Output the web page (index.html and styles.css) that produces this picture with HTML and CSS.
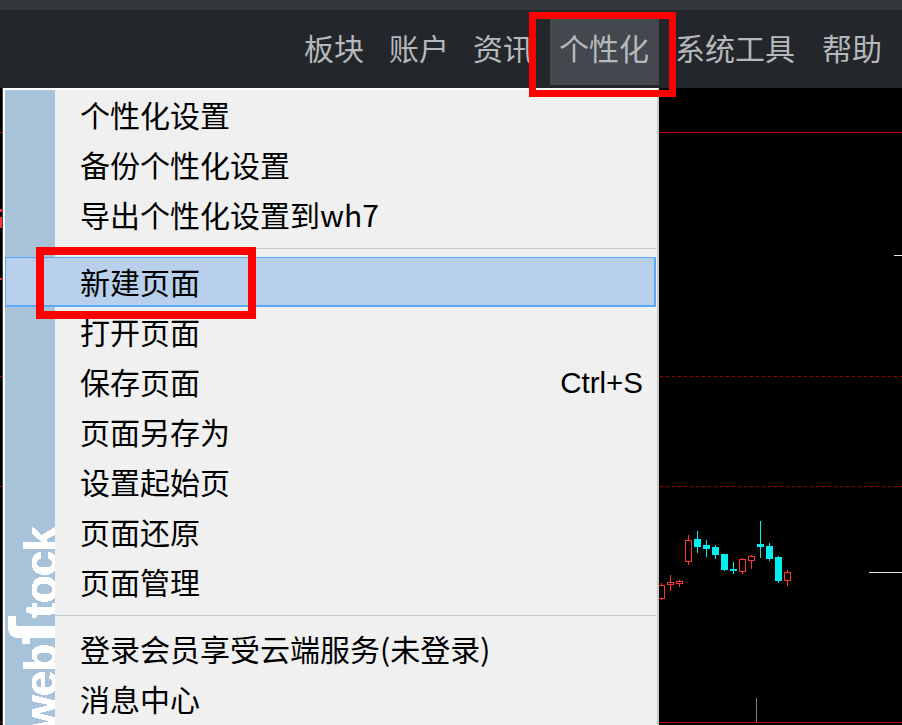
FILE: index.html
```html
<!DOCTYPE html>
<html lang="zh-CN">
<head>
<meta charset="utf-8">
<title>个性化</title>
<link rel="stylesheet" href="styles.css">
</head>
<body>
<div class="app">
  <div class="topstrip"></div>
  <nav class="menubar">
    <span class="nav-item">板块</span>
    <span class="nav-item">账户</span>
    <span class="nav-item nav-news">资讯</span>
    <span class="nav-item nav-active">个性化</span>
    <span class="nav-item nav-tools">系统工具</span>
    <span class="nav-item nav-help">帮助</span>
  </nav>
  <main class="chart">
    <svg class="chart-svg" width="902" height="637" viewBox="0 88 902 637">
      <defs>
        <filter id="hard-edge" x="0" y="0" width="100%" height="100%">
          <feComponentTransfer><feFuncA type="discrete" tableValues="0 1"/></feComponentTransfer>
        </filter>
      </defs>
      <g class="grid-solid">
        <line x1="0" x2="902" y1="132.5" y2="132.5"/>
        <line x1="0" x2="902" y1="722.5" y2="722.5"/>
      </g>
      <g class="grid-dash">
        <line x1="0" x2="902" y1="376.5" y2="376.5"/>
        <line x1="0" x2="902" y1="486.5" y2="486.5"/>
      </g>
      <g class="edge-mark">
        <rect x="0" y="209" width="2" height="3"/>
        <rect x="0" y="217" width="2" height="11"/>
        <rect x="0" y="278" width="2" height="2"/>
      </g>
      <g class="ticks">
        <line x1="894" x2="902" y1="255.5" y2="255.5"/>
        <line x1="869" x2="902" y1="572.5" y2="572.5"/>
      </g>
      <line class="vtick" x1="756.5" x2="756.5" y1="698" y2="722"/>
      <g class="up">
        <line x1="661.5" x2="661.5" y1="583" y2="600"/><rect x="658.5" y="585.5" width="6" height="13"/>
        <line x1="670.5" x2="670.5" y1="575" y2="591"/><rect x="667.5" y="582.5" width="6" height="2"/>
        <line x1="679.5" x2="679.5" y1="580" y2="587"/><rect x="676.5" y="581.5" width="6" height="2"/>
        <line x1="688.5" x2="688.5" y1="535" y2="565"/><rect x="685.5" y="540.5" width="6" height="21"/>
        <line x1="742.5" x2="742.5" y1="558" y2="574"/><rect x="739.5" y="559.5" width="6" height="12"/>
        <line x1="751.5" x2="751.5" y1="555" y2="569"/><rect x="748.5" y="556.5" width="6" height="4"/>
        <line x1="787.5" x2="787.5" y1="570" y2="586"/><rect x="784.5" y="572.5" width="6" height="8"/>
      </g>
      <g class="down">
        <line x1="697.5" x2="697.5" y1="531" y2="553"/><rect x="694" y="539" width="7" height="8"/>
        <line x1="706.5" x2="706.5" y1="540" y2="557"/><rect x="703" y="545" width="7" height="4"/>
        <line x1="715.5" x2="715.5" y1="545" y2="559"/><rect x="712" y="547" width="7" height="8"/>
        <line x1="724.5" x2="724.5" y1="554" y2="571"/><rect x="721" y="554" width="7" height="16"/>
        <line x1="733.5" x2="733.5" y1="562" y2="574"/><rect x="730" y="569" width="7" height="2"/>
        <line x1="760.5" x2="760.5" y1="521" y2="558"/><rect x="757" y="544" width="7" height="3"/>
        <line x1="769.5" x2="769.5" y1="543" y2="561"/><rect x="766" y="546" width="7" height="13"/>
        <line x1="778.5" x2="778.5" y1="556" y2="583"/><rect x="775" y="557" width="7" height="24"/>
      </g>
    </svg>
  </main>

  <div class="menu">
    <div class="menu-side"><span class="brand">web<span class="brand-s">ſ</span>tock</span></div>
    <div class="menu-list">
      <div class="menu-item">个性化设置</div>
      <div class="menu-item">备份个性化设置</div>
      <div class="menu-item">导出个性化设置到wh7</div>
      <div class="menu-sep"></div>
      <div class="menu-item is-selected">新建页面</div>
      <div class="menu-item">打开页面</div>
      <div class="menu-item">保存页面<span class="shortcut">Ctrl+S</span></div>
      <div class="menu-item">页面另存为</div>
      <div class="menu-item">设置起始页</div>
      <div class="menu-item">页面还原</div>
      <div class="menu-item">页面管理</div>
      <div class="menu-sep"></div>
      <div class="menu-item">登录会员享受云端服务(未登录)</div>
      <div class="menu-item">消息中心</div>
    </div>
  </div>

  <div class="mark mark-nav"></div>
  <div class="mark mark-item"></div>
</div>
</body>
</html>
```
FILE: styles.css
```css
* { box-sizing: border-box; }
html, body { margin: 0; padding: 0; background: #000; }
body { overflow: hidden; }
.app {
  position: relative;
  width: 902px;
  height: 725px;
  overflow: hidden;
  display: flex;
  flex-direction: column;
  font-family: "Noto Sans CJK SC", "Liberation Sans", sans-serif;
}
.topstrip { height: 10px; background: #33363b; flex: none; }
.menubar {
  height: 78px;
  flex: none;
  background: #23262a;
  display: flex;
  justify-content: flex-end;
  padding: 9px 20px 3px 0;
  font-size: 30px;
  color: #b6b9bc;
}
.nav-item {
  display: flex;
  align-items: center;
  margin-left: 25px;
  padding-bottom: 10px;
  line-height: 1;
  white-space: nowrap;
}
.nav-news { margin-left: 24px; }
.nav-active { background: #43474e; margin-left: 17px; padding: 0 10px 10px 9px; }
.nav-tools { margin-left: 16px; }
.nav-help { margin-left: 27px; }
.chart { flex: 1; position: relative; background: #000; }
.chart-svg { display: block; position: absolute; left: 0; top: 0; shape-rendering: crispEdges; }
.grid-solid line { stroke: #c80000; stroke-width: 1; }
.grid-dash line { stroke: #a00000; stroke-width: 1; stroke-dasharray: 3 3; }
.edge-mark rect { fill: #ff3232; }
.ticks line { stroke: #e6e6e6; stroke-width: 1; }
.vtick { stroke: #808080; stroke-width: 1; }
.up line { stroke: #ff3232; stroke-width: 1; }
.up rect { fill: #000; stroke: #ff3232; stroke-width: 1; }
.down line { stroke: #00f0f0; stroke-width: 1; }
.down rect { fill: #00f0f0; }

.menu {
  position: absolute;
  left: 3px;
  top: 88px;
  width: 656px;
  height: 660px;
  background: #f0f0f0;
  border: 2px solid #fff;
  border-right-color: #c8c8c8;
  box-shadow: -1px 0 0 #444;
  display: grid;
  grid-template-columns: minmax(0, 1fr);
}
.menu-side {
  grid-area: 1 / 1;
  width: 50px;
  background: #a8c2da;
  position: relative;
  overflow: hidden;
}
.brand {
  position: absolute;
  left: 13px;
  top: 641px;
  transform-origin: 0 0;
  transform: rotate(-90deg);
  color: #fff;
  font: bold 46px/1 "Liberation Sans", sans-serif;
  letter-spacing: -1px;
  -webkit-text-stroke: 0.6px #fff;
  white-space: nowrap;
  filter: url(#hard-edge);
}
.brand-s { font-family: "DejaVu Sans", sans-serif; font-weight: bold; font-size: 64px; line-height: 0; }
.menu-list { grid-area: 1 / 1; min-width: 0; display: flex; flex-direction: column; position: relative; }
.menu-item {
  height: 50px;
  flex: none;
  padding: 0 14px 2px 75px;
  display: flex;
  align-items: center;
  justify-content: space-between;
  font-size: 30px;
  line-height: 1;
  color: #000;
  white-space: nowrap;
}
.menu-item.is-selected {
  background: #b8d0eb;
  border: solid #5aa9f8;
  border-width: 1px 2px 2px 1px;
  padding-left: 74px;
  margin-right: 1px;
}
.shortcut { font-family: "Liberation Sans", sans-serif; font-size: 29.5px; margin-top: 4px; }
.menu-sep {
  height: 17px;
  flex: none;
  margin: 0 1px 0 50px;
  position: relative;
}
.menu-sep::after {
  content: "";
  position: absolute;
  left: 0; right: 0; top: 8px;
  height: 1px;
  background: #c8c8c8;
}
.mark { position: absolute; border-style: solid; border-color: #f00; pointer-events: none; }
.mark-nav { left: 529px; top: 12px; width: 147px; height: 85px; border-width: 7px; }
.mark-item { left: 36px; top: 247px; width: 220px; height: 72px; border-width: 8px; }
```
